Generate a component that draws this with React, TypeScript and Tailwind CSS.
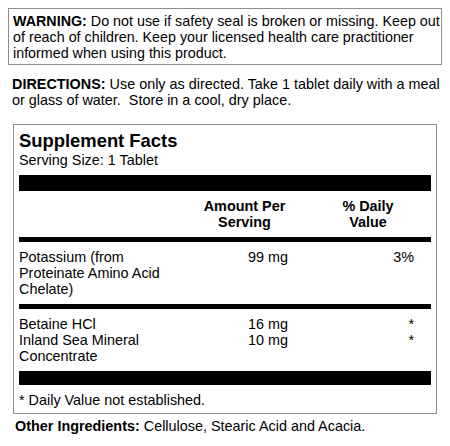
export default function App() {
  const rows1 = [{ name: "Potassium (from Proteinate Amino Acid Chelate)", amount: "99 mg", dv: "3%" }];
  const rows2 = [
    { name: "Betaine HCl", amount: "16 mg", dv: "*" },
    { name: "Inland Sea Mineral Concentrate", amount: "10 mg", dv: "*" },
  ];

  return (
    <div className="w-[450px] h-[446px] bg-white text-black text-[14.4px] leading-4 font-['Liberation_Sans',Arial,sans-serif] pt-2">
      {/* warning */}
      <div className="ml-2 w-[434px] border border-[#8c8c8c] pl-1 pr-0 pt-1 pb-[3px] text-[14.3px]">
        <span className="font-bold">WARNING:</span> Do not use if safety seal is broken or missing. Keep out of reach of
        children. Keep your licensed health care practitioner informed when using this product.
      </div>

      <div className="ml-3 mt-[11px] w-[432px]">
        <span className="font-bold">DIRECTIONS:</span> Use only as directed. Take 1 tablet daily with a meal or glass of
        water.{"\u00a0 "}Store in a cool, dry place.
      </div>

      {/* supplement facts */}
      <div className="ml-[13px] mt-4 w-[424px] border border-[#8c8c8c] px-[5px] pt-[5px] pb-[5px]">
        <div className="text-[18.4px] leading-[22px] font-bold">Supplement Facts</div>
        <div>Serving Size: 1 Tablet</div>
        <div className="mt-[7px] h-4 bg-black" />

        <div className="grid grid-cols-[181px_89px_1fr] py-[7px] font-bold">
          <div />
          <div className="text-center">
            Amount Per
            <br />
            Serving
          </div>
          <div className="pl-[33px] pr-[17px] text-center">
            % Daily
            <br />
            Value
          </div>
        </div>
        <div className="h-[5px] bg-black" />

        <div className="py-[7px]">
          {rows1.map((r) => (
            <div key={r.name} className="grid grid-cols-[181px_89px_1fr]">
              <div className="pr-[22px]">{r.name}</div>
              <div className="pl-12">{r.amount}</div>
              <div className="pl-[33px] pr-[17px] text-right">{r.dv}</div>
            </div>
          ))}
        </div>
        <div className="h-[5px] bg-black" />

        <div className="py-[7px]">
          {rows2.map((r) => (
            <div key={r.name} className="grid grid-cols-[181px_89px_1fr]">
              <div className="pr-[22px]">{r.name}</div>
              <div className="pl-12">{r.amount}</div>
              <div className="pl-[33px] pr-[17px] text-right">{r.dv}</div>
            </div>
          ))}
        </div>
        <div className="h-[14px] bg-black" />

        <div className="mt-[7px]">* Daily Value not established.</div>
      </div>

      <div className="ml-[15px] mt-[4px]">
        <span className="font-bold">Other Ingredients:</span> Cellulose, Stearic Acid and Acacia.
      </div>
    </div>
  );
}
